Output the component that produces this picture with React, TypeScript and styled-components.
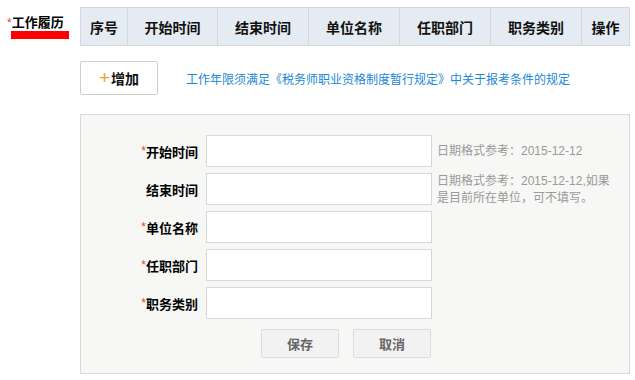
import React from "react";
import styled, { createGlobalStyle } from "styled-components";

const Global = createGlobalStyle`
  html, body { margin: 0; padding: 0; background: #fff; }
  body { font-family: "Liberation Sans", "Noto Sans CJK SC", sans-serif; color: #000; }
  * { box-sizing: border-box; }
`;

const Page = styled.div`
  display: flex;
  width: 635px;
  height: 380px;
`;

const Side = styled.div`
  width: 80px;
  flex: none;
  padding-top: 15px;
  padding-left: 7px;
`;

const SideLabel = styled.div`
  font-size: 13px;
  line-height: 16px;
  font-weight: bold;
  white-space: nowrap;
`;

const Star = styled.span`
  color: #e0412f;
  font-weight: normal;
  font-size: 12px;
`;

const RedBar = styled.div`
  width: 58px;
  height: 8px;
  margin-left: 4px;
  background: #ff0000;
`;

const Main = styled.div`
  width: 550px;
  flex: none;
  padding-top: 7px;
`;

const HeaderGrid = styled.div`
  display: grid;
  grid-template-columns: 47px 90px 91px 91px 91px 91px 47px;
  border: 1px solid #d4d8dc;
  background: #e5ebf2;
  width: 550px;
`;

const HeadCell = styled.div<{ $last?: boolean }>`
  height: 37px;
  display: flex;
  align-items: center;
  justify-content: center;
  font-size: 14px;
  font-weight: bold;
  border-right: ${(p) => (p.$last ? "none" : "1px solid #d4d8dc")};
  color: #111;
`;

const AddRow = styled.div`
  display: flex;
  align-items: center;
  margin-top: 15px;
`;

const AddButton = styled.button`
  width: 78px;
  height: 34px;
  border: 1px solid #cfcfcf;
  border-radius: 2px;
  background: #fff;
  font-family: inherit;
  font-size: 14px;
  font-weight: bold;
  color: #111;
  display: flex;
  align-items: center;
  justify-content: center;
  padding: 0;
`;

const Plus = styled.span`
  color: #f0a330;
  font-weight: normal;
  font-size: 19px;
  margin-right: 1px;
  line-height: 1;
  position: relative;
  top: -1px;
`;

const Rule = styled.a`
  margin-left: 28px;
  font-size: 12px;
  color: #1a87d6;
  text-decoration: none;
  white-space: nowrap;
`;

const Panel = styled.div`
  margin-top: 19px;
  width: 550px;
  height: 260px;
  border: 1px solid #d9d9d9;
  background: #f7f8f6;
  padding-top: 20px;
`;

const FormGrid = styled.div`
  display: grid;
  grid-template-columns: 125px 226px 1fr;
  grid-auto-rows: 32px;
  row-gap: 6px;
  align-items: start;
`;

const Label = styled.label`
  height: 32px;
  display: flex;
  align-items: center;
  justify-content: flex-end;
  padding-right: 8px;
  font-size: 13px;
  font-weight: bold;
  white-space: nowrap;
`;

const Input = styled.input`
  width: 226px;
  height: 32px;
  border: 1px solid #d8d8d8;
  background: #fff;
  outline: none;
`;

const Hint = styled.div<{ $multi?: boolean }>`
  padding-left: 5px;
  font-size: 12px;
  color: #999;
  white-space: nowrap;
  line-height: ${(p) => (p.$multi ? "17px" : "32px")};
`;

const Actions = styled.div`
  display: flex;
  gap: 14px;
  margin-top: 10px;
  padding-left: 180px;
`;

const ActionButton = styled.button`
  width: 78px;
  height: 29px;
  border: 1px solid #dcdcdc;
  border-radius: 2px;
  background: #f2f2f2;
  font-family: inherit;
  font-size: 13px;
  font-weight: bold;
  color: #666;
  padding: 0;
`;

const columns = ["序号", "开始时间", "结束时间", "单位名称", "任职部门", "职务类别", "操作"];

const fields: { label: string; required: boolean; hint?: string[] }[] = [
  { label: "开始时间", required: true, hint: ["日期格式参考：2015-12-12"] },
  { label: "结束时间", required: false, hint: ["日期格式参考：2015-12-12,如果", "是目前所在单位，可不填写。"] },
  { label: "单位名称", required: true },
  { label: "任职部门", required: true },
  { label: "职务类别", required: true },
];

export default function App() {
  return (
    <>
      <Global />
      <Page>
        <Side>
          <SideLabel>
            <Star>*</Star>工作履历
          </SideLabel>
          <RedBar />
        </Side>
        <Main>
          <HeaderGrid>
            {columns.map((c, i) => (
              <HeadCell key={c} $last={i === columns.length - 1}>
                {c}
              </HeadCell>
            ))}
          </HeaderGrid>
          <AddRow>
            <AddButton>
              <Plus>+</Plus>增加
            </AddButton>
            <Rule>工作年限须满足《税务师职业资格制度暂行规定》中关于报考条件的规定</Rule>
          </AddRow>
          <Panel>
            <FormGrid>
              {fields.map((f) => (
                <React.Fragment key={f.label}>
                  <Label>
                    {f.required && <Star>*</Star>}
                    {f.label}
                  </Label>
                  <Input />
                  <Hint $multi={!!f.hint && f.hint.length > 1}>
                    {f.hint && f.hint.map((h) => <div key={h}>{h}</div>)}
                  </Hint>
                </React.Fragment>
              ))}
            </FormGrid>
            <Actions>
              <ActionButton>保存</ActionButton>
              <ActionButton>取消</ActionButton>
            </Actions>
          </Panel>
        </Main>
      </Page>
    </>
  );
}
